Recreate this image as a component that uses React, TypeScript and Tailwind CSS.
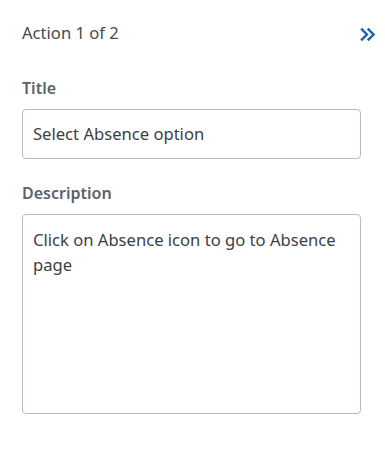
import React from "react";

export default function App() {
  return (
    <div
      className="w-[385px] h-[471px] bg-white pl-[22px] pr-[24px] pt-[21px]"
      style={{ fontFamily: '"Noto Sans", "Open Sans", sans-serif' }}
    >
      <div className="flex items-center justify-between h-[24px]">
        <span className="text-[16.6px] text-[#444a50]">Action 1 of 2</span>
        <svg width="17" height="17" viewBox="0 0 16 16" className="mr-[-15px] mt-[3px]">
          <path d="M2 2.5 L7.5 8 L2 13.5" fill="none" stroke="#1f63b0" strokeWidth="2.3" />
          <path d="M8.2 2.5 L13.7 8 L8.2 13.5" fill="none" stroke="#1f63b0" strokeWidth="2.3" />
        </svg>
      </div>
      <div className="mt-[32px] text-[16px] font-semibold text-[#5a626b] leading-[22px]">Title</div>
      <div className="mt-[10px] w-[339px] h-[50px] border border-[#b5bcc2] rounded-[4px] flex items-center px-[10px] text-[16.6px] text-[#3b3f44]">
        Select Absence option
      </div>
      <div className="mt-[23px] text-[16px] font-semibold text-[#5a626b] leading-[22px]">Description</div>
      <div className="mt-[10px] w-[339px] h-[200px] border border-[#b5bcc2] rounded-[4px] px-[10px] pt-[12px] text-[16.6px] leading-[25px] text-[#3b3f44]">
        Click on Absence icon to go to Absence page
      </div>
    </div>
  );
}
